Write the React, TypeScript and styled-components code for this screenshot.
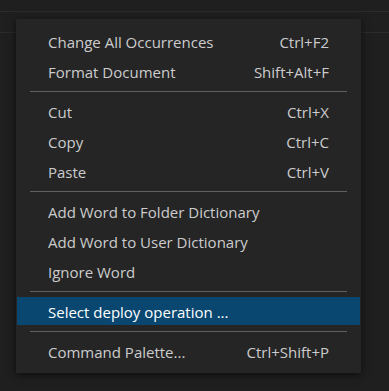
import styled, { createGlobalStyle } from 'styled-components';

const GlobalStyle = createGlobalStyle`
  html, body, #root {
    margin: 0;
    padding: 0;
    width: 100%;
    height: 100%;
    background: #1f1f1f;
  }
`;

type Entry = { label: string; shortcut?: string; active?: boolean } | 'sep';

const entries: Entry[] = [
  { label: 'Change All Occurrences', shortcut: 'Ctrl+F2' },
  { label: 'Format Document', shortcut: 'Shift+Alt+F' },
  'sep',
  { label: 'Cut', shortcut: 'Ctrl+X' },
  { label: 'Copy', shortcut: 'Ctrl+C' },
  { label: 'Paste', shortcut: 'Ctrl+V' },
  'sep',
  { label: 'Add Word to Folder Dictionary' },
  { label: 'Add Word to User Dictionary' },
  { label: 'Ignore Word' },
  'sep',
  { label: 'Select deploy operation ...', active: true },
  'sep',
  { label: 'Command Palette...', shortcut: 'Ctrl+Shift+P' },
];

export default function App() {
  return (
    <StyledPage>
      <GlobalStyle />
      <StyledTitleStrip />
      <StyledTabStrip />
      <StyledEditor />
      <StyledMenu role="menu">
        {entries.map((entry, i) =>
          entry === 'sep' ? (
            <StyledSeparator key={i} />
          ) : (
            <StyledMenuItem key={i} $active={entry.active} role="menuitem">
              <span>{entry.label}</span>
              {entry.shortcut && <StyledShortcut>{entry.shortcut}</StyledShortcut>}
            </StyledMenuItem>
          )
        )}
      </StyledMenu>
    </StyledPage>
  );
}

const StyledPage = styled.div`
  position: relative;
  display: flex;
  flex-direction: column;
  width: 389px;
  height: 391px;
  overflow: hidden;
  background: #1f1f1f;
  font-family: 'Open Sans', 'Noto Sans', sans-serif;
`;

const StyledTitleStrip = styled.div`
  height: 11px;
  flex-shrink: 0;
  border-bottom: 1px solid #2b2b2b;
`;

const StyledTabStrip = styled.div`
  height: 20px;
  flex-shrink: 0;
  border-bottom: 1px solid #2b2b2b;
`;

const StyledEditor = styled.div`
  flex: 1;
  background: #1f1f1f;
`;

const StyledMenu = styled.div`
  position: absolute;
  left: 16px;
  top: 19px;
  width: 343px;
  padding: 6px 0;
  background: #252526;
  border: 1px solid #252526;
  box-shadow: 0 2px 8px rgba(0, 0, 0, 0.6);
  display: flex;
  flex-direction: column;
`;

const StyledMenuItem = styled.div<{ $active?: boolean }>`
  display: flex;
  align-items: center;
  justify-content: space-between;
  box-sizing: border-box;
  height: 28px;
  margin: 1px 0;
  padding: 1px 31px 0 31px;
  font-size: 15px;
  color: ${(p) => (p.$active ? '#ffffff' : '#cccccc')};
  background: ${(p) => (p.$active ? '#094771' : 'transparent')};
  white-space: nowrap;
  cursor: default;
`;

const StyledShortcut = styled.span`
  color: #cccccc;
`;

const StyledSeparator = styled.div`
  height: 1px;
  margin: 5px 13px 4px 13px;
  background: #606060;
`;
